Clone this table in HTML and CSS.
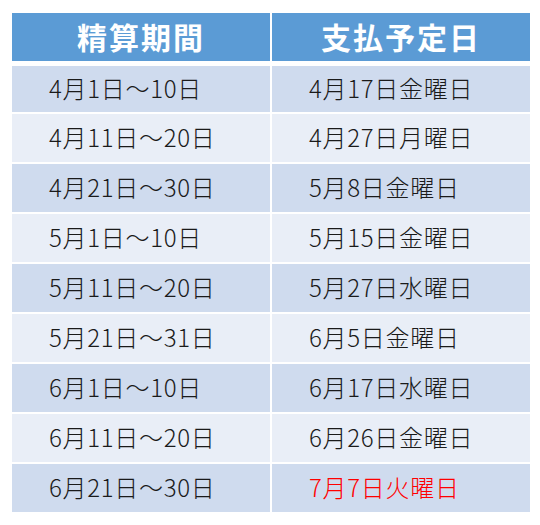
FILE: index.html
```html
<!DOCTYPE html>
<html lang="ja">
<head>
<meta charset="utf-8">
<link rel="stylesheet" href="styles.css">
</head>
<body>
<div class="schedule">
  <div class="row head">
    <div class="cell">精算期間</div>
    <div class="cell">支払予定日</div>
  </div>
  <div class="row odd first">
    <div class="cell">4月1日～10日</div>
    <div class="cell">4月17日金曜日</div>
  </div>
  <div class="row even">
    <div class="cell">4月11日～20日</div>
    <div class="cell">4月27日月曜日</div>
  </div>
  <div class="row odd">
    <div class="cell">4月21日～30日</div>
    <div class="cell">5月8日金曜日</div>
  </div>
  <div class="row even">
    <div class="cell">5月1日～10日</div>
    <div class="cell">5月15日金曜日</div>
  </div>
  <div class="row odd">
    <div class="cell">5月11日～20日</div>
    <div class="cell">5月27日水曜日</div>
  </div>
  <div class="row even">
    <div class="cell">5月21日～31日</div>
    <div class="cell">6月5日金曜日</div>
  </div>
  <div class="row odd">
    <div class="cell">6月1日～10日</div>
    <div class="cell">6月17日水曜日</div>
  </div>
  <div class="row even">
    <div class="cell">6月11日～20日</div>
    <div class="cell">6月26日金曜日</div>
  </div>
  <div class="row odd">
    <div class="cell">6月21日～30日</div>
    <div class="cell red">7月7日火曜日</div>
  </div>
</div>
</body>
</html>
```
FILE: styles.css
```css
html, body {
  margin: 0;
  padding: 0;
  background: #ffffff;
}
body {
  font-family: "Noto Sans CJK JP", "Noto Sans", sans-serif;
  color: #1a1a1a;
}
.schedule {
  margin: 13px 0 0 12px;
  width: 518px;
  display: flex;
  flex-direction: column;
  gap: 2px;
}
.row {
  display: grid;
  grid-template-columns: 258px 258px;
  column-gap: 2px;
  height: 48px;
}
.row.first {
  height: 46px;
}
.cell {
  display: flex;
  align-items: center;
  padding-left: 37px;
  font-size: 24px;
  font-weight: 300;
  letter-spacing: 0.7px;
  line-height: 1;
  padding-bottom: 2px;
}
.head {
  margin-bottom: 3px;
}
.head .cell {
  background: #5b9bd5;
  color: #ffffff;
  justify-content: center;
  padding-left: 0;
  font-size: 30px;
  font-weight: 700;
  letter-spacing: 2px;
}
.odd .cell {
  background: #cfdbee;
}
.even .cell {
  background: #e9eef7;
}
.cell.red {
  color: #ff0000;
}
```
